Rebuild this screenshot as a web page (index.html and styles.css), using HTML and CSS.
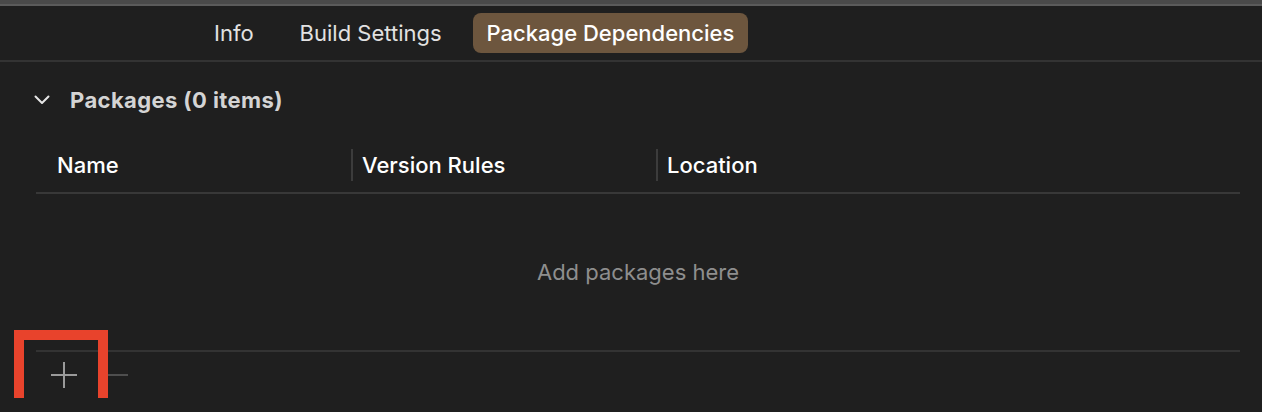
FILE: index.html
```html
<!DOCTYPE html>
<html>
<head>
<meta charset="utf-8">
<link rel="stylesheet" href="styles.css">
</head>
<body>
<div class="topbar"></div>
<nav class="tabbar">
  <span class="tab">Info</span>
  <span class="tab">Build Settings</span>
  <span class="tab active">Package Dependencies</span>
</nav>
<section class="section">
  <div class="section-head">
    <svg class="chevron" width="16" height="10" viewBox="0 0 16 10"><path d="M1.5 1.5 L8 8 L14.5 1.5" fill="none" stroke="#e6e6e6" stroke-width="2" stroke-linecap="round" stroke-linejoin="round"/></svg>
    <span class="section-title">Packages (0 items)</span>
  </div>
  <div class="table">
    <div class="thead">
      <div class="th th-name">Name</div>
      <div class="th th-version">Version Rules</div>
      <div class="th th-location">Location</div>
    </div>
    <div class="empty">Add packages here</div>
  </div>
  <div class="toolbar">
    <span class="btn-wrap">
      <svg class="plus" width="28" height="28" viewBox="0 0 28 28"><path d="M14 1 V27 M1 14 H27" stroke="#9a9a9a" stroke-width="2"/></svg>
      <span class="highlight"></span>
    </span>
    <svg class="minus" width="20" height="4" viewBox="0 0 20 4"><path d="M0 2 H20" stroke="#4e4e4e" stroke-width="2"/></svg>
  </div>
</section>
</body>
</html>
```
FILE: styles.css
```css
html, body {
  margin: 0;
  padding: 0;
  background: #1f1f1f;
  overflow: hidden;
  font-family: Inter, "Noto Sans", sans-serif;
}
.topbar {
  height: 4px;
  background: #4a4a4a;
  border-bottom: 2px solid #5b5b5b;
}
.tabbar {
  height: 54px;
  border-bottom: 2px solid #333333;
  display: flex;
  align-items: center;
  gap: 16px;
  padding-left: 199px;
  box-sizing: content-box;
}
.tab {
  font-size: 22px;
  color: #e2e2e2;
  padding: 0 15px;
  height: 40px;
  line-height: 40px;
  border-radius: 8px;
}
.tab.active {
  background: #6d563e;
  color: #ffffff;
  font-weight: 500;
  padding: 0 14px;
}
.section {
  padding: 0 22px 0 36px;
}
.section-head {
  display: flex;
  align-items: center;
  height: 76px;
}
.chevron {
  margin-left: -2px;
  margin-right: 20px;
}
.section-title {
  font-size: 22px;
  font-weight: 700;
  letter-spacing: 0.4px;
  color: #d4d4d4;
}
.thead {
  display: flex;
  height: 54px;
  align-items: flex-end;
  border-bottom: 2px solid #383838;
}
.th {
  font-size: 22px;
  color: #ffffff;
  font-weight: 500;
  height: 32px;
  line-height: 32px;
  margin-bottom: 11px;
}
.th-name {
  width: 294px;
  padding-left: 21px;
}
.th-version {
  width: 294px;
  padding-left: 9px;
  border-left: 2px solid #3c3c3c;
}
.th-location {
  flex: 1;
  padding-left: 9px;
  border-left: 2px solid #3c3c3c;
}
.empty {
  height: 156px;
  border-bottom: 2px solid #333333;
  display: flex;
  align-items: center;
  justify-content: center;
  font-size: 22px;
  color: #8e8e8e;
}
.toolbar {
  display: flex;
  align-items: center;
  height: 46px;
  margin-left: 14px;
  gap: 30px;
}
.btn-wrap {
  position: relative;
  display: flex;
}
.highlight {
  position: absolute;
  left: -36px;
  top: -31px;
  width: 74px;
  height: 80px;
  border: 10px solid #e8432c;
}
```
